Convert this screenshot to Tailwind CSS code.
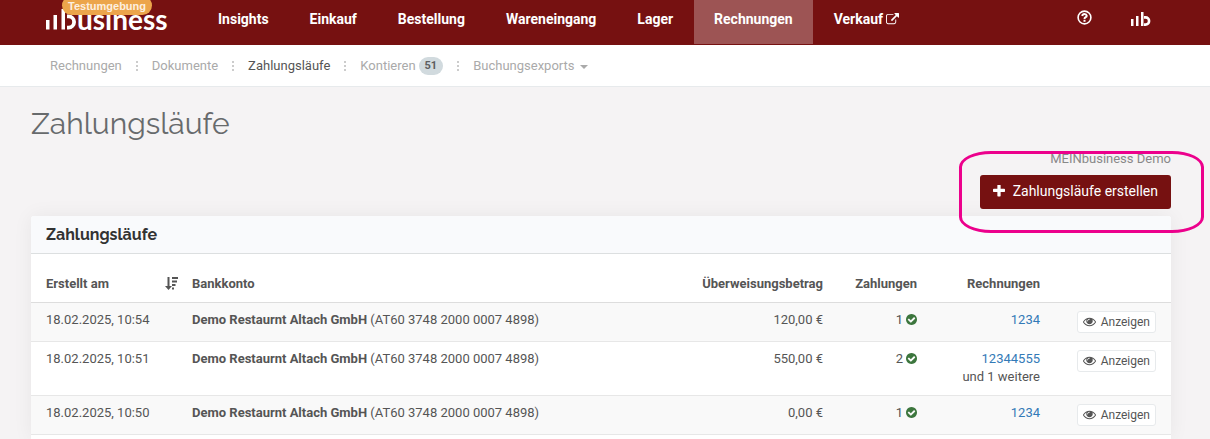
<!DOCTYPE html>
<html lang="de">
<head>
    <meta charset="UTF-8">
    <meta name="viewport" content="width=device-width, initial-scale=1.0">
    <title>Zahlungsläufe</title>
    <script src="https://cdn.jsdelivr.net/npm/@tailwindcss/browser@4"></script>
</head>
<body class="flex flex-col h-screen overflow-hidden bg-[#f5f3f4] font-[Roboto,sans-serif] text-[13px] leading-[18px] text-[#555]">

<!-- Shared icons -->
<svg class="hidden">
    <symbol id="eye" viewBox="0 0 1792 1792"><path d="M1664 960q-152-236-381-353 61 104 61 225 0 185-131.5 316.5t-316.5 131.5-316.5-131.5-131.5-316.5q0-121 61-225-229 117-381 353 133 205 333.5 326.5t434.5 121.5 434.5-121.5 333.5-326.5zm-720-384q0-20-14-34t-34-14q-125 0-214.5 89.5t-89.5 214.5q0 20 14 34t34 14 34-14 14-34q0-86 61-147t147-61q20 0 34-14t14-34zm848 384q0 34-20 69-140 230-376.5 368.5t-499.5 138.5-499.5-139-376.5-368q-20-35-20-69t20-69q140-229 376.5-368t499.5-139 499.5 139 376.5 368q20 35 20 69z"/></symbol>
    <symbol id="check" viewBox="128 128 1536 1536"><path d="M1412 734q0-28-18-46l-91-90q-19-19-45-19t-45 19l-408 407-226-226q-19-19-45-19t-45 19l-91 90q-18 18-18 46 0 27 18 45l362 362q19 19 45 19 27 0 46-19l543-543q18-18 18-45zm252 162q0 209-103 385.5t-279.5 279.5-385.5 103-385.5-103-279.5-279.5-103-385.5 103-385.5 279.5-279.5 385.5-103 385.5 103 279.5 279.5 103 385.5z"/></symbol>
    <symbol id="dots" viewBox="0 0 2 10"><path d="M0 0h2v2H0zM0 4h2v2H0zM0 8h2v2H0z"/></symbol>
</svg>

<!-- Main navigation -->
<header class="flex shrink-0 h-[45px] bg-[#761111] text-white">
    <a href="#" class="relative flex w-[198px] pl-[46px]" aria-label="business">
        <svg class="w-[31px] h-[30px] shrink-0" viewBox="0 0 31 30" fill="#fff">
            <path d="M0 20h3.500v9.500H0zM7.500 15H11v14.500H7.500zM15.500 9H19v20.500h-3.500z"/>
            <path d="M21 16.400h1.500a5.600 5.600 0 0 1 0 11.200H21" fill="none" stroke="#fff" stroke-width="3.800"/>
        </svg>
        <span class="pt-[3px] font-[Lato,sans-serif] font-bold text-[28px] leading-[32px]">usiness</span>
        <span class="absolute left-[62px] -top-[4px] h-[19px] rounded-full bg-[#eca54b] px-[6px] text-[11px] leading-[20px] font-bold text-[#fdf0e0] font-['Liberation_Sans',sans-serif]">Testumgebung</span>
    </a>
    <nav class="flex gap-[1px] h-[44px] text-[14px] leading-[39px] font-bold">
        <a href="#" class="px-[20px]">Insights</a>
        <a href="#" class="px-[20px]">Einkauf</a>
        <a href="#" class="px-[20px]">Bestellung</a>
        <a href="#" class="px-[20px]">Wareneingang</a>
        <a href="#" class="px-[20px]">Lager</a>
        <a href="#" class="px-[20px] bg-[#9d5454]">Rechnungen</a>
        <a href="#" class="flex gap-[3px] px-[20px]">Verkauf
            <svg class="w-[13px] h-[13px] mt-[13px]" viewBox="0 0 1792 1792" fill="currentColor"><path d="M1408 928v320q0 119-84.500 203.500t-203.500 84.500h-832q-119 0-203.500-84.500t-84.500-203.500v-832q0-119 84.500-203.500t203.500-84.500h704q14 0 23 9t9 23v64q0 14-9 23t-23 9h-704q-66 0-113 47t-47 113v832q0 66 47 113t113 47h832q66 0 113-47t47-113v-320q0-14 9-23t23-9h64q14 0 23 9t9 23zm384-864v512q0 26-19 45t-45 19-45-19l-176-176-652 652q-10 10-23 10t-23-10l-114-114q-10-10-10-23t10-23l652-652-176-176q-19-19-19-45t19-45 45-19h512q26 0 45 19t19 45z"/></svg>
        </a>
    </nav>
    <div class="flex ml-auto gap-[39px] pr-[59px] pt-[10px]">
        <a href="#" aria-label="Hilfe">
            <svg class="w-[15px] h-[15px]" viewBox="0 0 15 15" fill="none" stroke="#fff" stroke-width="1.600">
                <circle cx="7.500" cy="7.500" r="6.400"/>
                <path d="M5.200 6q.4-2 2.300-2t2.200 1.700q0 1-1 1.500-1.200.6-1.200 1.700" stroke-width="2"/>
                <path d="M6.500 9.800h2v2h-2z" fill="#fff" stroke="none"/>
            </svg>
        </a>
        <a href="#" aria-label="Konto">
            <svg class="w-[20px] h-[16px]" viewBox="0 0 20 16" fill="#fff">
                <path d="M0 9h2.500v7H0zM5 6h2.500v10H5zM10 2h2.500v14H10z"/>
                <path d="M13 7.400h1.500a3.600 3.600 0 0 1 0 7.200H13" fill="none" stroke="#fff" stroke-width="2.600"/>
            </svg>
        </a>
    </div>
</header>

<!-- Sub navigation -->
<nav class="flex items-center shrink-0 h-[42px] pl-[50px] gap-[14px] bg-white border-b border-[#e7eaec] text-[#aaa]">
    <a href="#">Rechnungen</a>
    <svg class="w-[2px] h-[10px]" fill="#ccc"><use href="#dots"/></svg>
    <a href="#">Dokumente</a>
    <svg class="w-[2px] h-[10px]" fill="#ccc"><use href="#dots"/></svg>
    <a href="#" class="text-[#555]">Zahlungsläufe</a>
    <svg class="w-[2px] h-[10px]" fill="#ccc"><use href="#dots"/></svg>
    <a href="#" class="flex items-center gap-[3px]">Kontieren
        <span class="rounded-full bg-[#d1dade] px-[6px] text-[11px] font-bold text-[#5e5e5e]">51</span>
    </a>
    <svg class="w-[2px] h-[10px]" fill="#ccc"><use href="#dots"/></svg>
    <a href="#" class="flex items-center gap-[5px]">Buchungsexports
        <svg class="w-[8px] h-[4px] mt-[2px]" viewBox="0 0 8 4" fill="#aaa"><path d="M0 0h8L4 4z"/></svg>
    </a>
</nav>

<main class="flex flex-col grow pl-[31px] pr-[39px] pt-[17px]">
    <h1 class="font-[Raleway,Lato,sans-serif] font-normal text-[30px] leading-[40px] text-[#676a6c]">Zahlungsläufe</h1>

    <div class="relative flex flex-col items-end self-end mt-[6px]">
        <span class="text-[#888]">MEINbusiness Demo</span>
        <button class="flex items-center gap-[8px] h-[34px] mt-[7px] px-[13px] pb-[2px] rounded-[3px] bg-[#761111] text-[14px] text-white">
            <svg class="w-[12px] h-[12px]" viewBox="192 192 1408 1408" fill="currentColor"><path d="M1600 736v192q0 40-28 68t-68 28h-416v416q0 40-28 68t-68 28h-192q-40 0-68-28t-28-68v-416h-416q-40 0-68-28t-28-68v-192q0-40 28-68t68-28h416v-416q0-40 28-68t68-28h192q40 0 68 28t28 68v416h416q40 0 68 28t28 68z"/></svg>
            Zahlungsläufe erstellen
        </button>
        <!-- Highlight around the create button -->
        <div class="absolute -left-[21px] -right-[33px] top-[1px] h-[82px] border-3 border-[#ec008c] rounded-[32px/16px] pointer-events-none z-10"></div>
    </div>

    <section class="grow mt-[7px] rounded-t-[3px] bg-white shadow-[0_0_20px_rgba(0,0,0,0.06)]">
        <h2 class="h-[38px] px-[15px] rounded-t-[3px] border-b border-[#dcdfe0] bg-[#f9fafc] font-[Raleway,Lato,sans-serif] font-bold text-[16px] leading-[38px] text-[#333]">Zahlungsläufe</h2>
        <table class="w-full table-fixed">
            <colgroup>
                <col class="w-[153px]">
                <col>
                <col class="w-[138px]">
                <col class="w-[94px]">
                <col class="w-[123px]">
                <col class="w-[123px]">
            </colgroup>
            <thead>
                <tr class="h-[48px] border-b border-[#ddd] text-left">
                    <th class="pl-[15px] pr-[5px] pt-[12px]">
                        <span class="flex items-center justify-between">Erstellt am
                            <svg class="w-[14px] h-[13px]" viewBox="0 0 14 13" fill="currentColor"><path d="M2.500 0h2v9H7l-3.500 4L0 9h2.500zM7 0h6v2H7zM7 3.500h5v2H7zM7 7h3.500v2H7zM7 10.500h2v2H7z"/></svg>
                        </span>
                    </th>
                    <th class="px-[8px] pt-[12px]">Bankkonto</th>
                    <th class="px-[8px] pt-[12px] text-right">Überweisungsbetrag</th>
                    <th class="px-[8px] pt-[12px] text-right">Zahlungen</th>
                    <th class="px-[8px] pt-[12px] text-right">Rechnungen</th>
                    <th></th>
                </tr>
            </thead>
            <tbody class="align-top">
                <tr class="border-b border-[#e7e7e7] bg-[#f9f9f9]">
                    <td class="pl-[15px] py-[8px]">18.02.2025, 10:54</td>
                    <td class="p-[8px]"><b>Demo Restaurnt Altach GmbH</b> (AT60 3748 2000 0007 4898)</td>
                    <td class="p-[8px] text-right">120,00 €</td>
                    <td class="p-[8px]"><span class="flex items-center justify-end gap-[3px]">1 <svg class="w-[11px] h-[11px]" fill="#3c763d"><use href="#check"/></svg></span></td>
                    <td class="p-[8px] text-right"><a href="#" class="text-[#337ab7]">1234</a></td>
                    <td class="py-[8px] pr-[15px]"><button class="flex items-center gap-[5px] h-[22px] ml-auto px-[5px] rounded-[3px] border border-[#e7eaec] bg-white text-[12px]"><svg class="w-[13px] h-[13px]" fill="currentColor"><use href="#eye"/></svg>Anzeigen</button></td>
                </tr>
                <tr class="h-[54px] border-b border-[#e7e7e7]">
                    <td class="pl-[15px] py-[8px]">18.02.2025, 10:51</td>
                    <td class="p-[8px]"><b>Demo Restaurnt Altach GmbH</b> (AT60 3748 2000 0007 4898)</td>
                    <td class="p-[8px] text-right">550,00 €</td>
                    <td class="p-[8px]"><span class="flex items-center justify-end gap-[3px]">2 <svg class="w-[11px] h-[11px]" fill="#3c763d"><use href="#check"/></svg></span></td>
                    <td class="p-[8px] text-right"><a href="#" class="text-[#337ab7]">12344555</a><br>und 1 weitere</td>
                    <td class="py-[8px] pr-[15px]"><button class="flex items-center gap-[5px] h-[22px] ml-auto px-[5px] rounded-[3px] border border-[#e7eaec] bg-white text-[12px]"><svg class="w-[13px] h-[13px]" fill="currentColor"><use href="#eye"/></svg>Anzeigen</button></td>
                </tr>
                <tr class="border-b border-[#e7e7e7] bg-[#f9f9f9]">
                    <td class="pl-[15px] py-[8px]">18.02.2025, 10:50</td>
                    <td class="p-[8px]"><b>Demo Restaurnt Altach GmbH</b> (AT60 3748 2000 0007 4898)</td>
                    <td class="p-[8px] text-right">0,00 €</td>
                    <td class="p-[8px]"><span class="flex items-center justify-end gap-[3px]">1 <svg class="w-[11px] h-[11px]" fill="#3c763d"><use href="#check"/></svg></span></td>
                    <td class="p-[8px] text-right"><a href="#" class="text-[#337ab7]">1234</a></td>
                    <td class="py-[8px] pr-[15px]"><button class="flex items-center gap-[5px] h-[22px] ml-auto px-[5px] rounded-[3px] border border-[#e7eaec] bg-white text-[12px]"><svg class="w-[13px] h-[13px]" fill="currentColor"><use href="#eye"/></svg>Anzeigen</button></td>
                </tr>
            </tbody>
        </table>
    </section>
</main>

</body>
</html>
